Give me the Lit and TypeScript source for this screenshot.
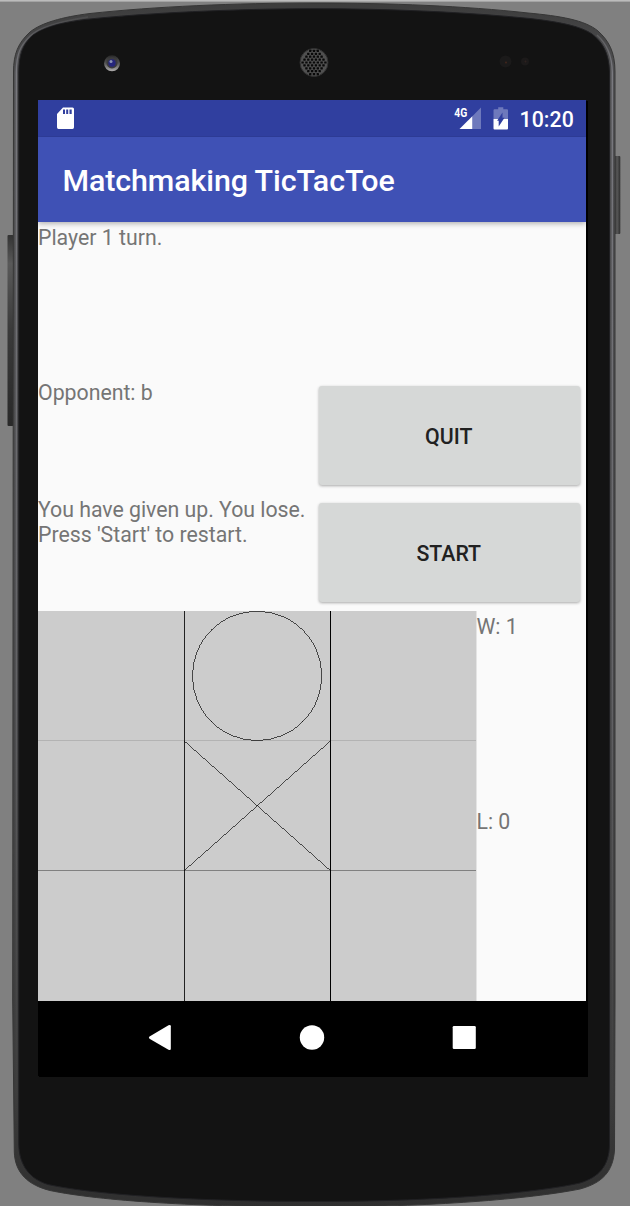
import { LitElement, html, css, svg } from "lit";
import { customElement, property } from "lit/decorators.js";

const OUTER =
  "M315 3C235 3 155 6.5 90 13.5C62 17 41 23 30 32C18 43 13.5 54 13.5 72L12.7 1000L14.3 1152C15 1173 28 1185 50 1190.5C100 1201 200 1207 315 1207C430 1207 530 1199 580 1189C602 1183 613 1172 614.5 1150L615 1000L615 72C615 52 609 41 598 31C585 20 560 16 528 13C465 6 390 3 315 3Z";
const INNER =
  "M315 8.7C235 8.7 145 13 85 19.5C57 23 42 28 33 35C22 45 19 55 18.8 72L18.8 1145C19.5 1166 30 1179 48 1184.5C95 1195 200 1201.5 315 1201.5C430 1201.5 530 1194 580 1183C599 1177 609 1166 609.5 1145L609.5 72C609 52 602 42 592 34C580 26 560 22 530 18.5C465 12 390 8.7 315 8.7Z";

function grilleHoles() {
  const holes = [];
  for (let r = -4; r <= 4; r++) {
    for (let c = -4; c <= 4; c++) {
      const x = c * 3.8 + (r % 2 ? 1.9 : 0);
      const y = r * 2.9;
      if (Math.hypot(x, y) < 12.6) {
        holes.push(svg`<rect x=${314 + x - 1.2} y=${62.5 + y - 1.1} width="2.4" height="2.2" rx=".4" fill="#080808"/>`);
      }
    }
  }
  return holes;
}

@customElement("device-frame")
export class DeviceFrame extends LitElement {
  static styles = css`
    :host { display: block; width: 630px; height: 1206px; }
    svg { display: block; }
  `;
  render() {
    return html`<svg width="630" height="1206" viewBox="0 0 630 1206">
      <defs>
        <linearGradient id="rim" x1="0" y1="0" x2="0" y2="1">
          <stop offset="0" stop-color="#3c3c3c"/><stop offset=".06" stop-color="#515153"/>
          <stop offset=".5" stop-color="#4a4a4c"/><stop offset=".9" stop-color="#3c3c3c"/><stop offset="1" stop-color="#2f2f2f"/>
        </linearGradient>
        <linearGradient id="shine" gradientUnits="userSpaceOnUse" x1="0" y1="17" x2="0" y2="1140">
          <stop offset="0" stop-color="#77777b" stop-opacity=".2"/><stop offset=".05" stop-color="#7a7a80"/>
          <stop offset=".6" stop-color="#6a6a6e" stop-opacity=".8"/><stop offset="1" stop-color="#555" stop-opacity="0"/>
        </linearGradient>
        <linearGradient id="key" x1="0" y1="0" x2="1" y2="0">
          <stop offset="0" stop-color="#303030"/><stop offset=".5" stop-color="#575757"/><stop offset="1" stop-color="#2e2e2e"/>
        </linearGradient>
        <linearGradient id="volume" x1="0" y1="0" x2="0" y2="1">
          <stop offset="0" stop-color="#333"/><stop offset=".15" stop-color="#595959"/><stop offset=".5" stop-color="#3a3a3a"/><stop offset="1" stop-color="#292929"/>
        </linearGradient>
        <linearGradient id="lens" x1="0" y1="0" x2="0" y2="1">
          <stop offset="0" stop-color="#292929"/><stop offset=".5" stop-color="#555"/><stop offset="1" stop-color="#b0aeae"/>
        </linearGradient>
      </defs>
      <rect width="630" height="1206" fill="#808080"/>
      <rect width="630" height="1.6" fill="#bcbcbc"/>
      <rect x="7.5" y="235" width="6" height="191" rx="1" fill="url(#volume)"/>
      <rect x="614" y="156" width="6.3" height="78" rx="1" fill="url(#key)"/>
      <path d=${OUTER} fill="url(#rim)" stroke="#363636" stroke-width="1"/>
      <path d=${INNER} fill="#131313" stroke="#202023" stroke-width="1"/>
      <path d="M16.3 1140V72C16.5 54 20 46 30 36C39 28 55 22 88 17" fill="none" stroke="url(#shine)" stroke-width="1.3"/>
      <path d="M612.3 1140V72C612 54 606 43 597 35" fill="none" stroke="url(#shine)" stroke-width="1.4"/>
      <circle cx="112" cy="63.3" r="8" fill="url(#lens)"/>
      <circle cx="112" cy="62.8" r="5.6" fill="#3b3b3e"/>
      <circle cx="112" cy="63" r="3.7" fill="#26267c"/>
      <circle cx="111" cy="61.5" r="1.5" fill="#8b93b5"/>
      <circle cx="314" cy="62.5" r="14" fill="#505050" stroke="#303030"/>
      ${grilleHoles()}
      <circle cx="505.5" cy="61.5" r="6" fill="#1b1a1a"/><circle cx="506" cy="62.5" r="1" fill="#42261c"/>
      <circle cx="525" cy="61.5" r="4" fill="#1c1a1a"/><circle cx="525.5" cy="61.5" r="1" fill="#2e211f"/>
      <rect x="39" y="101" width="549" height="976" fill="#000"/>
    </svg>`;
  }
}

@customElement("status-bar")
export class StatusBar extends LitElement {
  static styles = css`
    :host { display: flex; height: 36.5px; background: #303f9f; color: #fff; align-items: center; padding: 0 12px 0 19px; box-sizing: border-box; }
    .card { flex: none; margin-right: auto; }
    .signal { flex: none; margin-right: 12px; }
    .battery { flex: none; margin-right: 11px; }
    .clock { font: 500 21.3px/34px Roboto, sans-serif; padding-top: 3px; height: 34px; letter-spacing: 0.1px; }
    .net { font: 700 12.6px Roboto, sans-serif; }
  `;
  @property() time = "10:20";
  render() {
    return html`
      <svg class="card" width="17" height="36" viewBox="0 0 17 36">
        <path fill="#fff" fill-rule="evenodd" d="M6 7.5H15.5Q17 7.5 17 9V27.3Q17 29 15.5 29H1.5Q0 29 0 27.3V14ZM6 9.5V14H8V9.5ZM9.2 9.5V14H11.2V9.5ZM12.5 9.5V14H14.7V9.5Z"/>
      </svg>
      <svg class="signal" width="28" height="36" viewBox="0 0 28 36">
        <path fill="#fff" fill-opacity=".3" d="M28 7.5V29H19.3V16.3Z"/>
        <path fill="#fff" d="M19.3 16.3V29H6.5Z"/>
        <text class="net" x="1.2" y="17.2" fill="#fff" textLength="13" lengthAdjust="spacingAndGlyphs">4G</text>
      </svg>
      <svg class="battery" width="15" height="36" viewBox="0 0 15 36">
        <g transform="translate(.5 0)">
          <path fill="#fff" fill-opacity=".3" fill-rule="evenodd" d="M4.7 7.2H9.8V9.2H13.5Q14.5 9.2 14.5 10.2V19H0V10.2Q0 9.2 1 9.2H4.7Z"/>
          <path fill="#fff" d="M0 19H14.5V28.6Q14.5 29.6 13.5 29.6H1Q0 29.6 0 28.6Z"/>
          <path fill="#303f9f" d="M9 12.5V17.8H11L5.2 26.5V20.8H3.6Z"/>
        </g>
      </svg>
      <span class="clock">${this.time}</span>`;
  }
}

@customElement("game-board")
export class GameBoard extends LitElement {
  static styles = css`
    :host { display: block; background: #ccc; }
    svg { display: block; }
  `;
  render() {
    return html`<svg width="439" height="390" viewBox="0 0 439 390" fill="none">
      <path d="M0 129.5H438" stroke="#b3b3b3"/>
      <path d="M0 259.5H438" stroke="#808080"/>
      <path d="M146.5 0V390" stroke="#222"/>
      <path d="M292.5 0V390" stroke="#000"/>
      <circle cx="219.1" cy="64.9" r="64.7" stroke="#000" stroke-width=".75" stroke-opacity=".88" shape-rendering="crispEdges"/>
      <path d="M146.3 130L292.4 259.6M292.4 130L146.3 259.6" stroke="#000" stroke-width=".75" stroke-opacity=".88" shape-rendering="crispEdges"/>
      <path d="M438.5 0V390" stroke="#e4e4e4"/>
    </svg>`;
  }
}

@customElement("app-root")
export class AppRoot extends LitElement {
  static styles = css`
    :host { display: block; position: relative; width: 630px; height: 1206px; overflow: hidden; font-family: Roboto, sans-serif; }
    .device { position: absolute; inset: 0; }
    .stage { position: relative; box-sizing: border-box; height: 1206px; padding: 100px 44px 130px 38px; }
    .screen { width: 548px; height: 976px; display: flex; flex-direction: column; background: #fafafa; }
    .toolbar { flex: none; height: 85.5px; background: #3f51b5; color: #fff; font-size: 30.4px; font-weight: 500; letter-spacing: -0.1px; line-height: 88px; padding-left: 24.5px; box-sizing: border-box; box-shadow: 0 1px 6px rgba(0, 0, 0, .36); white-space: nowrap; clip-path: inset(0 0 -10px 0); }
    .content { flex: 1; display: grid; grid-template-rows: 155.8px 116.8px 116.4px 390px; color: #757575; font-size: 21.3px; line-height: 25px; }
    .label { padding-top: 3px; white-space: pre; }
    .row { display: grid; grid-template-columns: 274px 274px; }
    .row .label { padding-top: 2.4px; letter-spacing: -0.02px; }
    .btn { margin: 8.5px 6px 9.4px 6.5px; border: 0; padding: 2px 1px 0 0; border-radius: 3px; background: #d6d8d7; color: #212121; font: 500 21.3px/25px Roboto, sans-serif; box-shadow: 0 1px 3px rgba(0, 0, 0, .33); }
    .game { display: grid; grid-template-columns: 439px 109px; }
    .board { width: 439px; }
    .scores { display: grid; grid-template-rows: 1fr 1fr; margin-left: -0.5px; letter-spacing: -0.03px; }
    .nav { flex: none; height: 75px; background: #000; }
    .nav svg { display: block; }
  `;
  render() {
    return html`
      <device-frame class="device"></device-frame>
      <div class="stage">
        <main class="screen">
          <status-bar></status-bar>
          <header class="toolbar">Matchmaking TicTacToe</header>
          <section class="content">
            <div class="label">Player 1 turn.</div>
            <div class="row">
              <div class="label">Opponent: b</div>
              <button class="btn">QUIT</button>
            </div>
            <div class="row">
              <div class="label">You have given up. You lose.
Press 'Start' to restart.</div>
              <button class="btn">START</button>
            </div>
            <div class="game">
              <game-board class="board"></game-board>
              <div class="scores">
                <div class="label">W: 1</div>
                <div class="label">L: 0</div>
              </div>
            </div>
          </section>
          <nav class="nav">
            <svg width="548" height="75" viewBox="0 0 548 75" fill="#fff">
              <path d="M111.5 35.5L130.5 24.3Q132.8 23.3 132.8 25.3V47.7Q132.8 49.8 130.5 48.8L111.5 37.8Q110.2 36.6 111.5 35.5Z"/>
              <circle cx="274" cy="36.5" r="12.2"/>
              <rect x="414.7" y="25" width="23.1" height="23" rx="1.3"/>
            </svg>
          </nav>
        </main>
      </div>`;
  }
}
